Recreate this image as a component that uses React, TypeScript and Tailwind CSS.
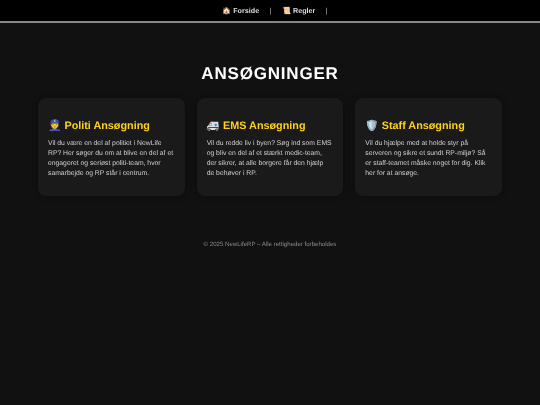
const font = { fontFamily: '"Liberation Sans", Arial, sans-serif' };

const cards = [
  {
    emoji: "👮",
    title: "Politi Ansøgning",
    text: "Vil du være en del af politiet i NewLife\nRP? Her søger du om at blive en del af et\nengageret og seriøst politi-team, hvor\nsamarbejde og RP står i centrum.",
  },
  {
    emoji: "🚑",
    title: "EMS Ansøgning",
    text: "Vil du redde liv i byen? Søg ind som EMS\nog bliv en del af et stærkt medic-team,\nder sikrer, at alle borgere får den hjælp\nde behøver i RP.",
  },
  {
    emoji: "🛡️",
    title: "Staff Ansøgning",
    text: "Vil du hjælpe med at holde styr på\nserveren og sikre et sundt RP-miljø? Så\ner staff-teamet måske noget for dig. Klik\nher for at ansøge.",
  },
];

export default function App() {
  return (
    <div className="min-h-[405px] bg-[#111111] text-white blur-[0.3px] [text-rendering:geometricPrecision]" style={font}>
      <nav className="h-[23px] bg-black border-b-2 border-[#888888] flex justify-center items-center gap-[10.5px] pl-[10px] pt-px text-[7.2px] font-bold text-[#dddddd]">
        <span>🏠 Forside</span>
        <span className="font-normal text-[#bbbbbb]">|</span>
        <span>📜 Regler</span>
        <span className="font-normal text-[#bbbbbb]">|</span>
      </nav>
      <main className="px-[38px] pt-[41px]">
        <h1 className="text-center text-[17px] leading-[20px] font-bold tracking-[0.8px] text-white">ANSØGNINGER</h1>
        <div className="grid grid-cols-3 gap-3 mt-[14px]">
          {cards.map((c) => (
            <div key={c.title} className="h-[98px] rounded-lg bg-[#1a1a1a] px-[10px] pt-[21px] shadow-[0_0_6px_rgba(0,0,0,0.4)]">
              <h2 className="text-[10.8px] leading-[14px] font-bold text-[#ffd21f] whitespace-nowrap">{c.emoji} {c.title}</h2>
              <p className="mt-[5.5px] text-[6.8px] leading-[10.3px] text-[#cfcfcf] whitespace-pre">{c.text}</p>
            </div>
          ))}
        </div>
        <footer className="mt-[44px] text-center text-[6.1px] leading-[9px] text-[#8a8a8a]">© 2025 NewLifeRP – Alle rettigheder forbeholdes</footer>
      </main>
    </div>
  );
}
